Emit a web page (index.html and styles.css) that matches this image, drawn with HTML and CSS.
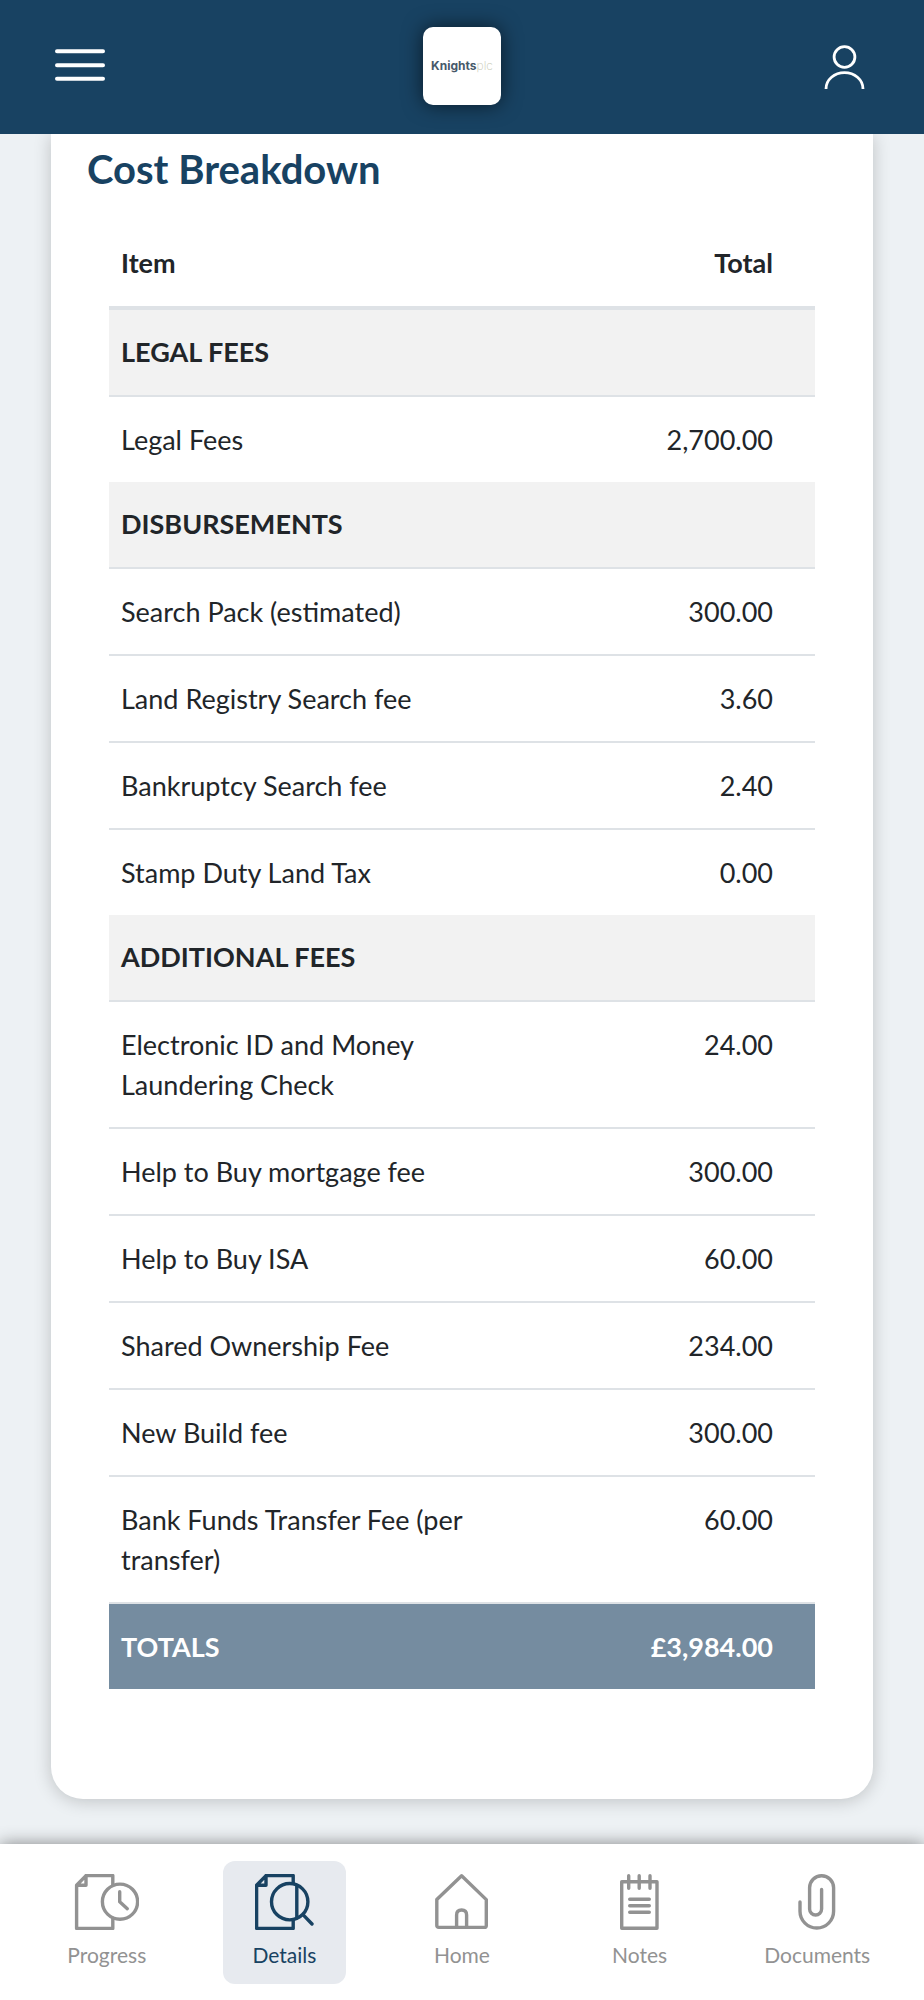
FILE: index.html
```html
<!DOCTYPE html>
<html lang="en">
<head>
<meta charset="utf-8">
<meta name="viewport" content="width=device-width, initial-scale=1">
<title>Cost Breakdown</title>
<link rel="stylesheet" href="styles.css">
</head>
<body>
<header class="topbar">
  <button class="icon-button" type="button" aria-label="Menu">
    <svg width="50" height="34" viewBox="0 0 50 34" stroke-width="4"><path d="M2 2.3H48M2 16.2H48M2 29.8H48"/></svg>
  </button>
  <a class="logo" href="#"><span class="logo-name">Knights</span><span class="logo-suffix">plc</span></a>
  <button class="icon-button icon-button-end" type="button" aria-label="Account">
    <svg width="45" height="46" viewBox="0 0 45 46" stroke-width="2.8"><circle cx="20.5" cy="14" r="10.4"/><path d="M2 46C2 36.5 10.5 29.7 20.5 29.7S39 36.5 39 46" stroke-linecap="butt"/></svg>
  </button>
</header>

<main class="content">
  <section class="card">
    <h1 class="card-title">Cost Breakdown</h1>
    <table class="costs">
      <thead>
        <tr><th scope="col">Item</th><th class="amount" scope="col">Total</th></tr>
      </thead>
      <tbody>
        <tr class="group"><th colspan="2" scope="colgroup">LEGAL FEES</th></tr>
        <tr><td>Legal Fees</td><td class="amount">2,700.00</td></tr>
        <tr class="group"><th colspan="2" scope="colgroup">DISBURSEMENTS</th></tr>
        <tr><td>Search Pack (estimated)</td><td class="amount">300.00</td></tr>
        <tr><td>Land Registry Search fee</td><td class="amount">3.60</td></tr>
        <tr><td>Bankruptcy Search fee</td><td class="amount">2.40</td></tr>
        <tr><td>Stamp Duty Land Tax</td><td class="amount">0.00</td></tr>
        <tr class="group"><th colspan="2" scope="colgroup">ADDITIONAL FEES</th></tr>
        <tr><td>Electronic ID and Money Laundering Check</td><td class="amount">24.00</td></tr>
        <tr><td>Help to Buy mortgage fee</td><td class="amount">300.00</td></tr>
        <tr><td>Help to Buy ISA</td><td class="amount">60.00</td></tr>
        <tr><td>Shared Ownership Fee</td><td class="amount">234.00</td></tr>
        <tr><td>New Build fee</td><td class="amount">300.00</td></tr>
        <tr><td>Bank Funds Transfer Fee (per transfer)</td><td class="amount">60.00</td></tr>
      </tbody>
      <tfoot>
        <tr><th scope="row">TOTALS</th><td class="amount">£3,984.00</td></tr>
      </tfoot>
    </table>
  </section>
</main>

<nav class="tabbar" aria-label="Main">
  <a class="tab" href="#">
    <svg width="65" height="56" viewBox="-1 0 65 56"><path d="M37.8 11.3V1.6H11L1.6 11.3V54.4H37.8V44M11 1.6V11.3H1.6"/><circle cx="45" cy="27.7" r="17.6"/><path d="M44.7 17.7V27.7L52.3 34.7"/></svg>
    <span>Progress</span>
  </a>
  <a class="tab tab-active" href="#" aria-current="page">
    <svg width="59" height="56" viewBox="0 0 59 56"><path d="M38.2 9.5V1.6H11L1.6 11.3V54.4H38.2V46M11 1.6V11.3H1.6M41.8 11.5V44M48.7 41.3L57 50"/><circle cx="34.7" cy="27.7" r="18.2"/></svg>
    <span>Details</span>
  </a>
  <a class="tab" href="#">
    <svg width="53" height="56" viewBox="0 0 53 56"><path d="M26.6 1.8L51.3 25.6V51.4Q51.3 53.4 49.3 53.4H3.8Q1.8 53.4 1.8 51.4V25.6ZM21.6 53V41Q21.6 36 26.6 36T31.6 41V53"/></svg>
    <span>Home</span>
  </a>
  <a class="tab" href="#">
    <svg width="39" height="56" viewBox="0 0 39 56"><path d="M1.7 7.7H37V54.3H1.7ZM8.7 1.7V14.3M19.2 1.7V14.3M30 1.7V14.3M9.7 25.3H29.3M9.7 31.7H29.3M9.7 38.2H29.3"/></svg>
    <span>Notes</span>
  </a>
  <a class="tab" href="#">
    <svg width="38" height="56" viewBox="0 0 38 56"><path d="M2 28V37.2A16.8 16.8 0 0 0 35.6 37.2V13.7A12 12 0 0 0 11.6 13.7V35A6 6 0 0 0 23.6 35V15.5"/></svg>
    <span>Documents</span>
  </a>
</nav>
</body>
</html>
```
FILE: styles.css
```css
* { box-sizing: border-box; }

body {
  margin: 0;
  min-height: 100vh;
  display: flex;
  flex-direction: column;
  background: #edf1f4;
  color: #212529;
  font-family: Lato, "Open Sans", sans-serif;
  font-size: 27px;
  line-height: 40px;
}

svg {
  display: block;
  fill: none;
  stroke: currentColor;
  stroke-linecap: round;
  stroke-linejoin: round;
}

.topbar {
  position: relative;
  z-index: 1;
  display: grid;
  grid-template-columns: 1fr auto 1fr;
  align-items: center;
  height: 134px;
  padding: 0 55px 2px;
  background: #184262;
}

.icon-button {
  justify-self: start;
  padding: 0;
  border: 0;
  background: none;
  color: #fff;
  cursor: pointer;
}

.icon-button-end { justify-self: end; }

.logo {
  display: flex;
  align-items: center;
  justify-content: center;
  width: 78px;
  height: 78px;
  border-radius: 10px;
  background: #fff;
  box-shadow: 0 0 20px rgba(0, 0, 0, 0.6);
  font-family: Inter, sans-serif;
  font-size: 12px;
  line-height: 16px;
  text-decoration: none;
}

.logo-name { color: #46596a; font-weight: 700; }
.logo-suffix { color: #c6c8b2; font-weight: 200; }

.content {
  flex: 1;
  padding: 0 51px 45px;
}

.card {
  padding: 11px 36px 110px;
  border-radius: 0 0 32px 32px;
  background: #fff;
  box-shadow: 0 2px 18px rgba(0, 0, 0, 0.2);
}

.card-title {
  margin: 0 0 28px;
  color: #184262;
  font-size: 40px;
  font-weight: 700;
  line-height: 48px;
}

.costs {
  width: calc(100% - 44px);
  margin: 0 22px;
  border-spacing: 0;
  table-layout: fixed;
}

.costs th,
.costs td {
  padding: 22px 12px 23px;
  text-align: left;
  vertical-align: top;
}

.costs td {
  padding: 23px 12px 22px;
  border-top: 2px solid #dee2e6;
}

.costs thead th { width: 60%; border-bottom: 4px solid #dee2e6; }
.costs thead .amount { width: 40%; }
.costs .group th { background: #f2f2f2; }

.costs .amount {
  padding-right: 42px;
  text-align: right;
}

.costs tfoot th,
.costs tfoot td {
  padding-top: 23px;
  padding-bottom: 22px;
  border-top: 2px solid #dee2e6;
  background: #758ca0;
  background-clip: padding-box;
  color: #fff;
  font-weight: 700;
}

.tabbar {
  position: relative;
  display: grid;
  grid-template-columns: repeat(5, 1fr);
  justify-items: center;
  height: 156px;
  padding: 17px 18px 0;
  background: #fff;
  box-shadow: 0 0 16px rgba(0, 0, 0, 0.45);
}

.tab {
  display: flex;
  flex-direction: column;
  align-items: center;
  gap: 10px;
  min-width: 123px;
  height: 123px;
  padding-top: 13px;
  border-radius: 12px;
  color: #929292;
  font-size: 21px;
  line-height: 30px;
  text-decoration: none;
}

.tab svg { stroke-width: 3.4; }

.tab-active {
  background: #e7eaef;
  color: #184262;
}
```
